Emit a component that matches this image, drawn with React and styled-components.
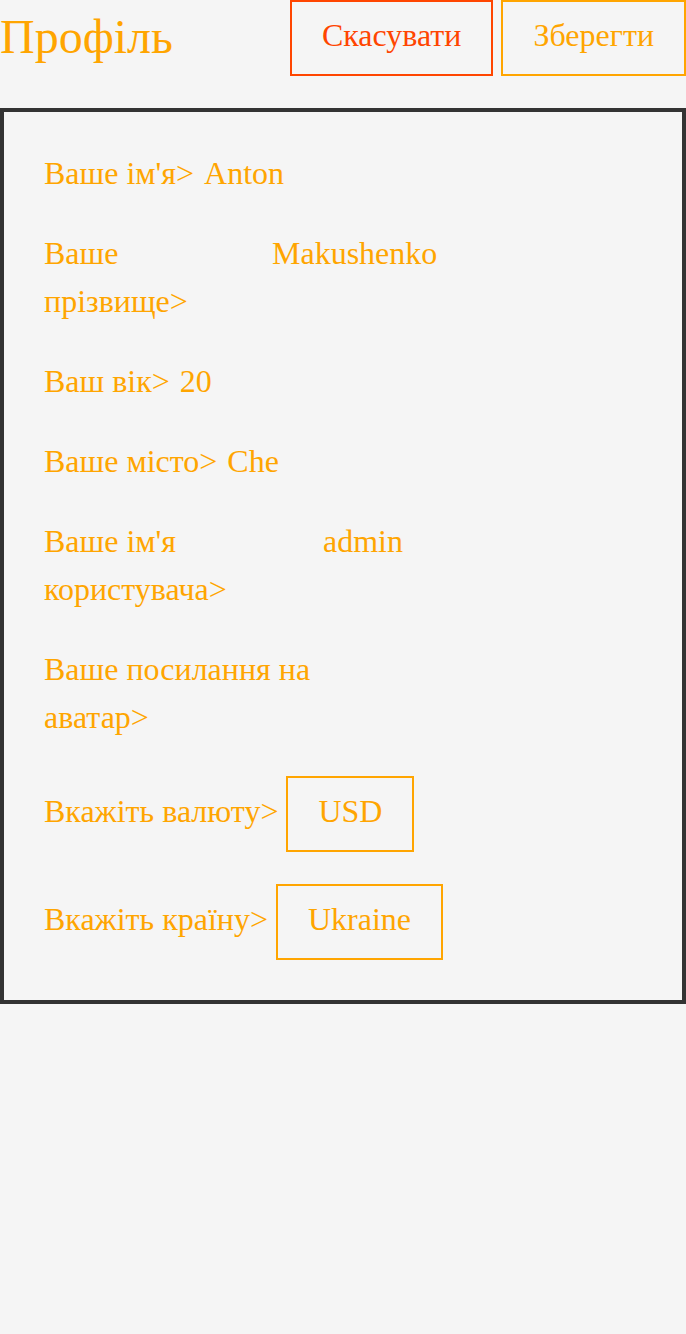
import styled, { createGlobalStyle } from 'styled-components'

const GlobalStyle = createGlobalStyle`
  * {
    box-sizing: border-box;
  }
  body {
    margin: 0;
    background: #f5f5f5;
    font-family: 'Liberation Serif', 'Times New Roman', serif;
    color: #ffa500;
  }
`

const fields = [
  { label: "Ваше ім'я>", value: 'Anton' },
  { label: 'Ваше прізвище>', value: 'Makushenko', width: 218 },
  { label: 'Ваш вік>', value: '20' },
  { label: 'Ваше місто>', value: 'Che' },
  { label: "Ваше ім'я користувача>", value: 'admin', width: 269 },
  { label: 'Ваше посилання на аватар>', value: '', width: 269 },
]

const selects = [
  { label: 'Вкажіть валюту>', value: 'USD' },
  { label: 'Вкажіть країну>', value: 'Ukraine' },
]

const App = () => {
  return (
    <>
      <GlobalStyle />
      <Header>
        <Title>Профіль</Title>
        <Actions>
          <Button $variant='cancel'>Скасувати</Button>
          <Button>Зберегти</Button>
        </Actions>
      </Header>
      <Panel>
        {fields.map((field) => (
          <Row key={field.label}>
            <Label $width={field.width}>{field.label}</Label>
            {field.value && <Value>{field.value}</Value>}
          </Row>
        ))}
        {selects.map((item) => (
          <SelectRow key={item.label}>
            <Label>{item.label}</Label>
            <Picker>{item.value}</Picker>
          </SelectRow>
        ))}
      </Panel>
    </>
  )
}

const Header = styled.header`
  display: flex;
  justify-content: space-between;
  align-items: center;
  height: 76px;
`

const Title = styled.h1`
  margin: 0;
  padding-bottom: 4px;
  font-size: 48px;
  font-weight: 400;
  color: #ffa500;
`

const Actions = styled.div`
  display: flex;
  gap: 8px;
`

const Button = styled.button`
  font-family: inherit;
  font-size: 32px;
  line-height: 48px;
  padding: 9px 30px 15px;
  background: transparent;
  border: 2px solid ${({ $variant }) => ($variant === 'cancel' ? '#ff4500' : '#ffa500')};
  color: ${({ $variant }) => ($variant === 'cancel' ? '#ff4500' : '#ffa500')};
  cursor: pointer;
`

const Panel = styled.section`
  margin-top: 32px;
  border: 4px solid #333;
  padding: 40px;
  display: flex;
  flex-direction: column;
  gap: 32px;
  font-size: 32px;
  line-height: 48px;
`

const Row = styled.div`
  display: flex;
  align-items: flex-start;
  gap: 10px;
`

const SelectRow = styled(Row)`
  align-items: center;
  gap: 8px;
`

/* glyphs sit a little high in the original, nudge text without moving boxes */
const Label = styled.span`
  max-width: ${({ $width }) => ($width ? `${$width}px` : 'none')};
  flex-shrink: 0;
  transform: translateY(-3px);
`

const Value = styled.span`
  transform: translateY(-3px);
`

const Picker = styled.div`
  border: 2px solid #ffa500;
  padding: 9px 30px 15px;
`

export default App
